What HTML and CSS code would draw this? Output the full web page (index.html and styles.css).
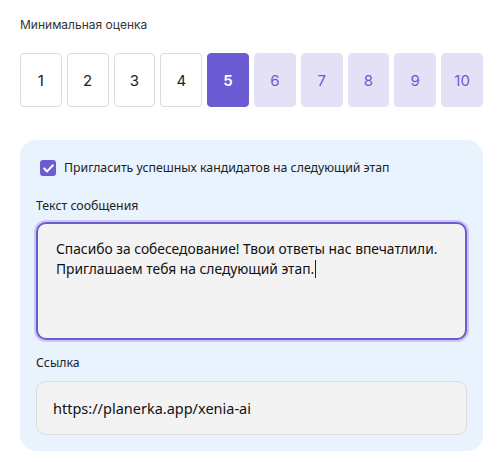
FILE: index.html
```html
<!DOCTYPE html>
<html lang="ru">
<head>
    <meta charset="UTF-8">
    <meta name="viewport" content="width=device-width, initial-scale=1.0">
    <title>Минимальная оценка</title>
    <link rel="stylesheet" href="styles.css">
</head>
<body>
    <div class="score-title">Минимальная оценка</div>

    <!-- Score selector -->
    <div class="scores">
        <button class="score">1</button>
        <button class="score">2</button>
        <button class="score">3</button>
        <button class="score">4</button>
        <button class="score active">5</button>
        <button class="score passed">6</button>
        <button class="score passed">7</button>
        <button class="score passed">8</button>
        <button class="score passed">9</button>
        <button class="score passed">10</button>
    </div>

    <div class="invite-panel">
        <label class="check-row">
            <span class="check-box">
                <svg width="11" height="9" viewBox="0 0 11 9"><path d="M1.2 4.6 L4.1 7.4 L9.8 1.4" fill="none" stroke="#fff" stroke-width="2.1" stroke-linecap="round" stroke-linejoin="round"/></svg>
            </span>
            Пригласить успешных кандидатов на следующий этап
        </label>

        <label class="field-label" for="message">Текст сообщения</label>
        <div class="message" id="message">Спасибо за собеседование! Твои ответы нас впечатлили. Приглашаем тебя на следующий этап.<span class="caret"></span></div>

        <label class="field-label link-label" for="link">Ссылка</label>
        <div class="link-input" id="link">https://planerka.app/xenia-ai</div>
    </div>
</body>
</html>
```

FILE: styles.css
```css
body {
    font-family: "Noto Sans", sans-serif;
    margin: 0;
    padding: 16px 20px;
    color: #222;
    background: #fff;
}
.score-title {
    font-family: Inter, sans-serif;
    font-size: 12px;
    line-height: 18px;
    color: #333;
}
.scores {
    display: flex;
    gap: 5px;
    margin-top: 19px;
}
.score {
    flex: 1;
    height: 54px;
    padding: 0;
    font-family: Inter, sans-serif;
    font-size: 15px;
    color: #222;
    background: #fff;
    border: 1px solid #dcdcdc;
    border-radius: 4px;
}
.score.active {
    background: #6b5cd3;
    border-color: #6b5cd3;
    color: #fff;
    font-weight: 600;
}
.score.passed {
    background: #e4e1f6;
    border-color: #e4e1f6;
    color: #6b5cd3;
}
.invite-panel {
    margin-top: 33px;
    padding: 20px 16px 16px;
    background: #e8f3fe;
    border-radius: 16px;
}
.check-row {
    display: flex;
    align-items: center;
    gap: 8px;
    padding-left: 4px;
    font-size: 12.3px;
    line-height: 16px;
}
.check-box {
    width: 16px;
    height: 16px;
    border-radius: 3px;
    background: #6b5cd3;
    display: flex;
    align-items: center;
    justify-content: center;
}
.field-label {
    display: block;
    margin: 22px 0 8px;
    font-size: 12.3px;
    line-height: 16px;
}
.link-label {
    margin-top: 15px;
    margin-bottom: 10px;
}
.message {
    height: 118px;
    box-sizing: border-box;
    padding: 15px 18px;
    background: #f3f3f3;
    border: 2px solid #6b5cd3;
    border-radius: 10px;
    box-shadow: 0 0 0 2px #cbc6f2;
    font-size: 13.8px;
    line-height: 20px;
    color: #111;
}
.caret {
    display: inline-block;
    width: 1px;
    height: 18px;
    margin-left: 1px;
    vertical-align: -4px;
    background: #222;
}
.link-input {
    height: 54px;
    box-sizing: border-box;
    padding: 0 16px;
    display: flex;
    align-items: center;
    background: #f3f3f3;
    border: 1px solid #dcdcdc;
    border-radius: 10px;
    font-size: 14.5px;
    color: #111;
}
```
